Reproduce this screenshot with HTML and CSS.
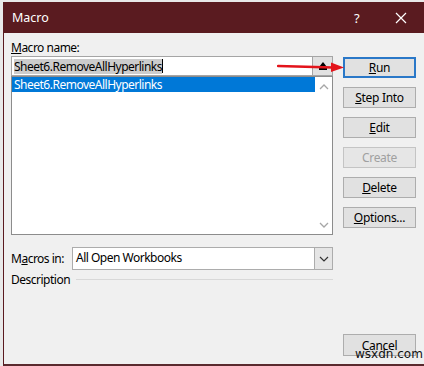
FILE: index.html
```html
<!DOCTYPE html>
<html lang="en">
<head>
    <meta charset="UTF-8">
    <title>Macro</title>
    <link rel="stylesheet" href="styles.css">
</head>
<body>
    <div class="dialog">
        <div class="titlebar">
            <span class="title">Macro</span>
            <span class="help">?</span>
            <span class="close">
                <svg width="12" height="12" viewBox="0 0 12 12"><path d="M1 1L11 11M11 1L1 11" stroke="#fff" stroke-width="1.2"/></svg>
            </span>
        </div>

        <div class="content">
            <div class="top">
                <div class="left">
                    <div class="label"><u>M</u>acro name:</div>
                    <div class="namebox">
                        <div class="nameinput"><span class="picked">Sheet6.RemoveAllHyperlinks</span><span class="caret"></span></div>
                        <div class="upbtn">
                            <svg width="10" height="10" viewBox="0 0 10 10"><path d="M5 1L9 6H1Z" fill="#000"/><rect x="1" y="7" width="8" height="2" fill="#000"/></svg>
                        </div>
                    </div>
                    <div class="listbox">
                        <div class="items">
                            <div class="item selected">Sheet6.RemoveAllHyperlinks</div>
                        </div>
                        <div class="vscroll">
                            <svg width="10" height="6" viewBox="0 0 10 6"><path d="M1 5L5 1L9 5" fill="none" stroke="#a6a6a6" stroke-width="1.3"/></svg>
                            <svg width="10" height="6" viewBox="0 0 10 6"><path d="M1 1L5 5L9 1" fill="none" stroke="#a6a6a6" stroke-width="1.3"/></svg>
                        </div>
                    </div>
                </div>

                <div class="buttons">
                    <button class="btn default"><u>R</u>un</button>
                    <button class="btn"><u>S</u>tep Into</button>
                    <button class="btn"><u>E</u>dit</button>
                    <button class="btn disabled">Create</button>
                    <button class="btn"><u>D</u>elete</button>
                    <button class="btn"><u>O</u>ptions...</button>
                </div>
            </div>

            <div class="macros-in">
                <span class="inlabel">M<u>a</u>cros in:</span>
                <div class="select">
                    <span class="select-text">All Open Workbooks</span>
                    <span class="dropbtn">
                        <svg width="10" height="6" viewBox="0 0 10 6"><path d="M1 1L5 5L9 1" fill="none" stroke="#333" stroke-width="1.2"/></svg>
                    </span>
                </div>
            </div>

            <div class="description">
                <span>Description</span>
                <span class="rule"></span>
            </div>

            <div class="footer">
                <button class="btn">Cancel</button>
            </div>
        </div>

        <!-- red annotation arrow pointing at Run -->
        <svg class="arrow" width="70" height="12" viewBox="0 0 70 12">
            <path d="M1 5L56 6.5" stroke="#e3141b" stroke-width="2.4" stroke-linecap="round"/>
            <path d="M54 1.5L67 6.5L54 11Z" fill="#e3141b"/>
        </svg>

        <div class="watermark">wsxdn.com</div>
    </div>
</body>
</html>
```

FILE: styles.css
```css
body {
    margin: 0;
    background-color: #e9e9e9;
    font-family: "Noto Sans", sans-serif;
    font-size: 12px;
    letter-spacing: -0.5px;
    color: #000;
}
.dialog {
    position: relative;
    margin: 2px 0 0 3px;
    height: 362px;
    background-color: #f0f0f0;
    border-left: 1px solid #5a1a1f;
    border-bottom: 2px solid #5a2a2e;
}
.titlebar {
    display: flex;
    align-items: center;
    height: 31px;
    background-color: #5a1b20;
    color: #fff;
    padding-left: 8px;
}
.title {
    flex: 1;
    font-size: 12.5px;
    letter-spacing: 0;
}
.help {
    width: 41px;
    font-size: 13px;
}
.close {
    width: 29px;
    display: flex;
}
.content {
    padding: 7px 8px 0 7px;
}
.top {
    display: flex;
    gap: 10px;
}
.left {
    width: 322px;
}
.label {
    height: 16px;
    line-height: 16px;
}
.namebox {
    display: flex;
    height: 20px;
}
.nameinput {
    flex: 1;
    display: flex;
    align-items: center;
    background-color: #fff;
    border: 1px solid #a5a5a5;
    border-right: none;
    padding-left: 2px;
}
.picked {
    background-color: #cccccc;
    line-height: 15px;
}
.caret {
    width: 1px;
    height: 14px;
    background-color: #000;
}
.upbtn {
    width: 19px;
    display: flex;
    align-items: center;
    justify-content: center;
    background-color: #e1e1e1;
    border: 1px solid #a5a5a5;
}
.listbox {
    display: flex;
    height: 157px;
    background-color: #fff;
    border: 1px solid #8c8c8c;
}
.items {
    flex: 1;
}
.item {
    height: 15px;
    line-height: 15px;
    padding-left: 2px;
}
.item.selected {
    background-color: #0078d7;
    color: #fff;
}
.vscroll {
    width: 17px;
    display: flex;
    flex-direction: column;
    justify-content: space-between;
    align-items: center;
    padding: 7px 0 6px;
    background-color: #fff;
}
.buttons {
    display: flex;
    flex-direction: column;
    gap: 9px;
    padding-top: 17px;
}
.btn {
    width: 73px;
    height: 21px;
    padding: 0;
    background-color: #e1e1e1;
    border: 1px solid #adadad;
    font-family: "Noto Sans", sans-serif;
    font-size: 12px;
    letter-spacing: -0.3px;
    color: #000;
}
.btn.default {
    border: 2px solid #2a78c8;
}
.btn.disabled {
    color: #a0a0a0;
    background-color: #e6e6e6;
    border-color: #c4c4c4;
}
.macros-in {
    display: flex;
    align-items: center;
    margin-top: 12px;
    width: 322px;
}
.inlabel {
    width: 61px;
}
.select {
    flex: 1;
    display: flex;
    height: 21px;
    background-color: #fff;
    border: 1px solid #acacac;
}
.select-text {
    flex: 1;
    line-height: 19px;
    padding-left: 3px;
}
.dropbtn {
    width: 17px;
    display: flex;
    align-items: center;
    justify-content: center;
    background-color: #e5e5e5;
    border-left: 1px solid #acacac;
}
.description {
    display: flex;
    align-items: center;
    width: 322px;
    height: 16px;
    margin-top: 1px;
}
.rule {
    flex: 1;
    height: 1px;
    margin-left: 6px;
    background-color: #d8d8d8;
}
.footer {
    display: flex;
    justify-content: flex-end;
    margin-top: 47px;
}
.footer .btn {
    height: 22px;
}
.arrow {
    position: absolute;
    left: 273px;
    top: 59px;
}
.watermark {
    position: absolute;
    left: 351px;
    top: 345px;
    font-family: "DejaVu Sans", sans-serif;
    font-size: 12px;
    letter-spacing: 0;
    color: #111;
}
```
